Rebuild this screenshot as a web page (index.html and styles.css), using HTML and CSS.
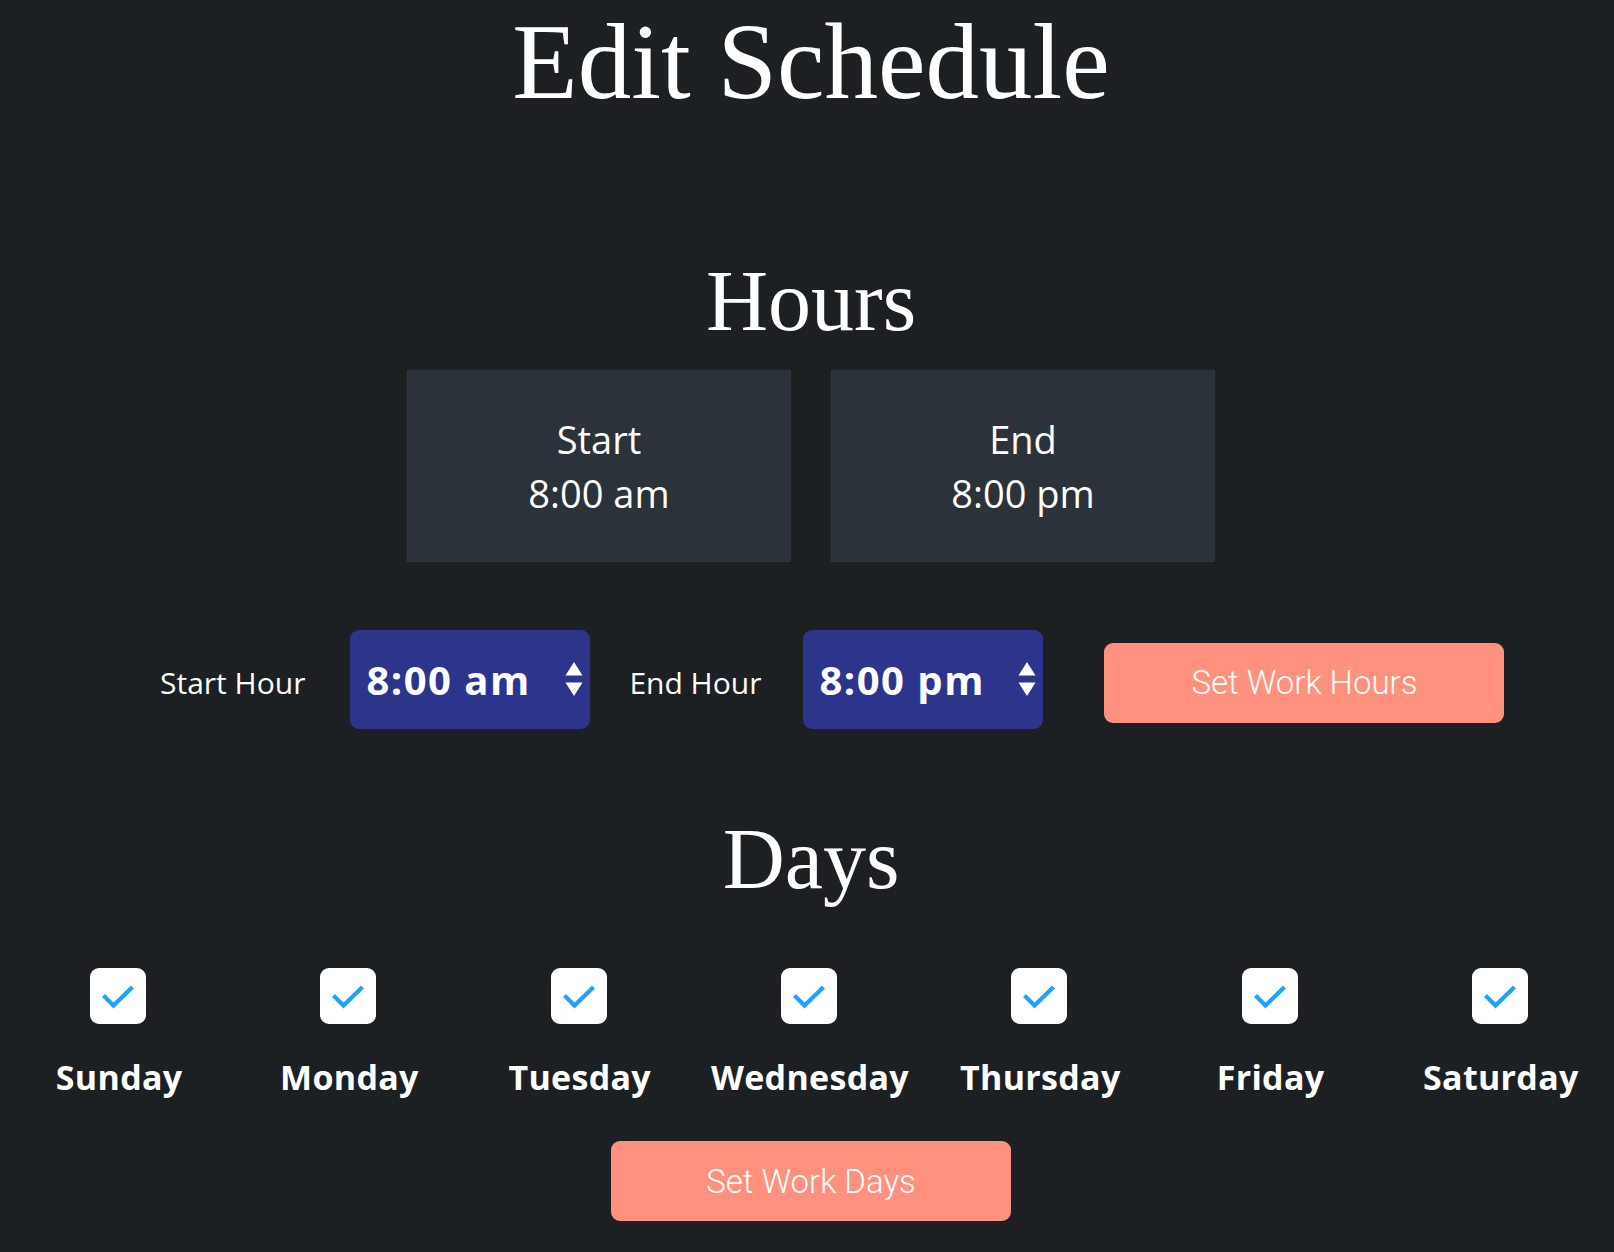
FILE: index.html
```html
<!DOCTYPE html>
<html lang="en">
<head>
<meta charset="utf-8">
<title>Edit Schedule</title>
<link rel="stylesheet" href="styles.css">
</head>
<body>
<main class="page">
  <h1 class="title">Edit Schedule</h1>

  <section class="hours">
    <h2 class="heading">Hours</h2>
    <div class="cards">
      <div class="card">
        <div class="card-line">Start</div>
        <div class="card-line">8:00 am</div>
      </div>
      <div class="card">
        <div class="card-line">End</div>
        <div class="card-line">8:00 pm</div>
      </div>
    </div>

    <form class="hour-form">
      <label class="field-label label-start">Start Hour</label>
      <div class="select select-start">
        <span class="select-value">8:00 am</span>
        <svg class="spinner" width="18" height="35" viewBox="0 0 18 35"><polygon points="9,0 17.5,13.5 0.5,13.5" fill="#fff"/><polygon points="0.5,20.5 17.5,20.5 9,34" fill="#fff"/></svg>
      </div>
      <label class="field-label label-end">End Hour</label>
      <div class="select select-end">
        <span class="select-value">8:00 pm</span>
        <svg class="spinner" width="18" height="35" viewBox="0 0 18 35"><polygon points="9,0 17.5,13.5 0.5,13.5" fill="#fff"/><polygon points="0.5,20.5 17.5,20.5 9,34" fill="#fff"/></svg>
      </div>
      <button type="button" class="btn btn-hours">Set Work Hours</button>
    </form>
  </section>

  <section class="days">
    <h2 class="heading heading-days">Days</h2>
    <div class="day-grid">
      <div class="day"><span class="check"><svg width="56" height="56" viewBox="0 0 56 56"><polyline points="13.5,27.5 23.5,37.5 42.5,19" fill="none" stroke="#1ea1ff" stroke-width="4.2"/></svg></span><span class="day-name">Sunday</span></div>
      <div class="day"><span class="check"><svg width="56" height="56" viewBox="0 0 56 56"><polyline points="13.5,27.5 23.5,37.5 42.5,19" fill="none" stroke="#1ea1ff" stroke-width="4.2"/></svg></span><span class="day-name">Monday</span></div>
      <div class="day"><span class="check"><svg width="56" height="56" viewBox="0 0 56 56"><polyline points="13.5,27.5 23.5,37.5 42.5,19" fill="none" stroke="#1ea1ff" stroke-width="4.2"/></svg></span><span class="day-name">Tuesday</span></div>
      <div class="day"><span class="check"><svg width="56" height="56" viewBox="0 0 56 56"><polyline points="13.5,27.5 23.5,37.5 42.5,19" fill="none" stroke="#1ea1ff" stroke-width="4.2"/></svg></span><span class="day-name">Wednesday</span></div>
      <div class="day"><span class="check"><svg width="56" height="56" viewBox="0 0 56 56"><polyline points="13.5,27.5 23.5,37.5 42.5,19" fill="none" stroke="#1ea1ff" stroke-width="4.2"/></svg></span><span class="day-name">Thursday</span></div>
      <div class="day"><span class="check"><svg width="56" height="56" viewBox="0 0 56 56"><polyline points="13.5,27.5 23.5,37.5 42.5,19" fill="none" stroke="#1ea1ff" stroke-width="4.2"/></svg></span><span class="day-name">Friday</span></div>
      <div class="day"><span class="check"><svg width="56" height="56" viewBox="0 0 56 56"><polyline points="13.5,27.5 23.5,37.5 42.5,19" fill="none" stroke="#1ea1ff" stroke-width="4.2"/></svg></span><span class="day-name">Saturday</span></div>
    </div>
    <div class="days-action">
      <button type="button" class="btn btn-days">Set Work Days</button>
    </div>
  </section>
</main>
</body>
</html>
```

FILE: styles.css
```css
html, body {
  margin: 0;
  padding: 0;
  background: #1c2023;
}

html {
  overflow-x: hidden;
}

body {
  padding-left: 8px;
  color: #ffffff;
  font-family: "Open Sans", "Noto Sans", sans-serif;
}

.page {
  width: 1606px;
  display: flex;
  flex-direction: column;
  align-items: center;
}

.title {
  margin: 2px 0 0 0;
  font-family: "Liberation Serif", "Times New Roman", serif;
  font-weight: 400;
  font-size: 107px;
  line-height: 120px;
  color: #ffffff;
}

.hours,
.days {
  width: 100%;
  display: flex;
  flex-direction: column;
  align-items: center;
}

.heading {
  margin: 129px 0 0 0;
  font-family: "Liberation Serif", "Times New Roman", serif;
  font-weight: 400;
  font-size: 86px;
  line-height: 100px;
  color: #ffffff;
}

.heading-days {
  margin-top: 80px;
}

.cards {
  margin-top: 19px;
  display: flex;
  gap: 40px;
}

.card {
  width: 384px;
  height: 192px;
  box-sizing: border-box;
  background: #2c3239;
  border: 1px solid #30363e;
  display: flex;
  flex-direction: column;
  justify-content: center;
  align-items: center;
}

.card-line {
  font-size: 38px;
  line-height: 54px;
  color: #ffffff;
}

.hour-form {
  margin: 68px 0 0 0;
  width: 100%;
  box-sizing: border-box;
  padding-left: 152px;
  display: flex;
  align-items: center;
}

.field-label {
  font-size: 30px;
  line-height: 40px;
  color: #ffffff;
  position: relative;
  top: 3px;
}

.label-start {
  margin-right: 45px;
}

.label-end {
  margin-right: 42px;
}

.select {
  width: 240px;
  height: 99px;
  box-sizing: border-box;
  padding: 0 7px 0 16px;
  background: #2d348c;
  border-radius: 9px;
  display: flex;
  align-items: center;
  justify-content: space-between;
}

.select-start {
  margin-right: 39px;
}

.select-end {
  margin-right: 61px;
}

.select-value {
  font-weight: 700;
  font-size: 40px;
  line-height: 50px;
  letter-spacing: 1.5px;
  color: #ffffff;
}

.spinner {
  display: block;
}

.btn {
  width: 400px;
  height: 80px;
  border: none;
  border-radius: 9px;
  background: #ff917e;
  color: #ffffff;
  font-family: Roboto, "Liberation Sans", sans-serif;
  font-weight: 300;
  font-size: 33px;
  padding: 0;
  cursor: pointer;
}

.btn-hours {
  position: relative;
  top: 3px;
}

.day-grid {
  margin-top: 59px;
  margin-left: -2px;
  width: 1612px;
  display: grid;
  grid-template-columns: repeat(7, 1fr);
}

.day {
  display: flex;
  flex-direction: column;
  align-items: center;
}

.check {
  width: 56px;
  height: 56px;
  background: #ffffff;
  border-radius: 9px;
  display: block;
  margin-left: -2px;
}

.check svg {
  display: block;
}

.day-name {
  margin-top: 30px;
  font-weight: 700;
  font-size: 34px;
  line-height: 46px;
  letter-spacing: 0.3px;
  color: #ffffff;
}

.days-action {
  margin-top: 41px;
  display: flex;
  justify-content: center;
}
```
